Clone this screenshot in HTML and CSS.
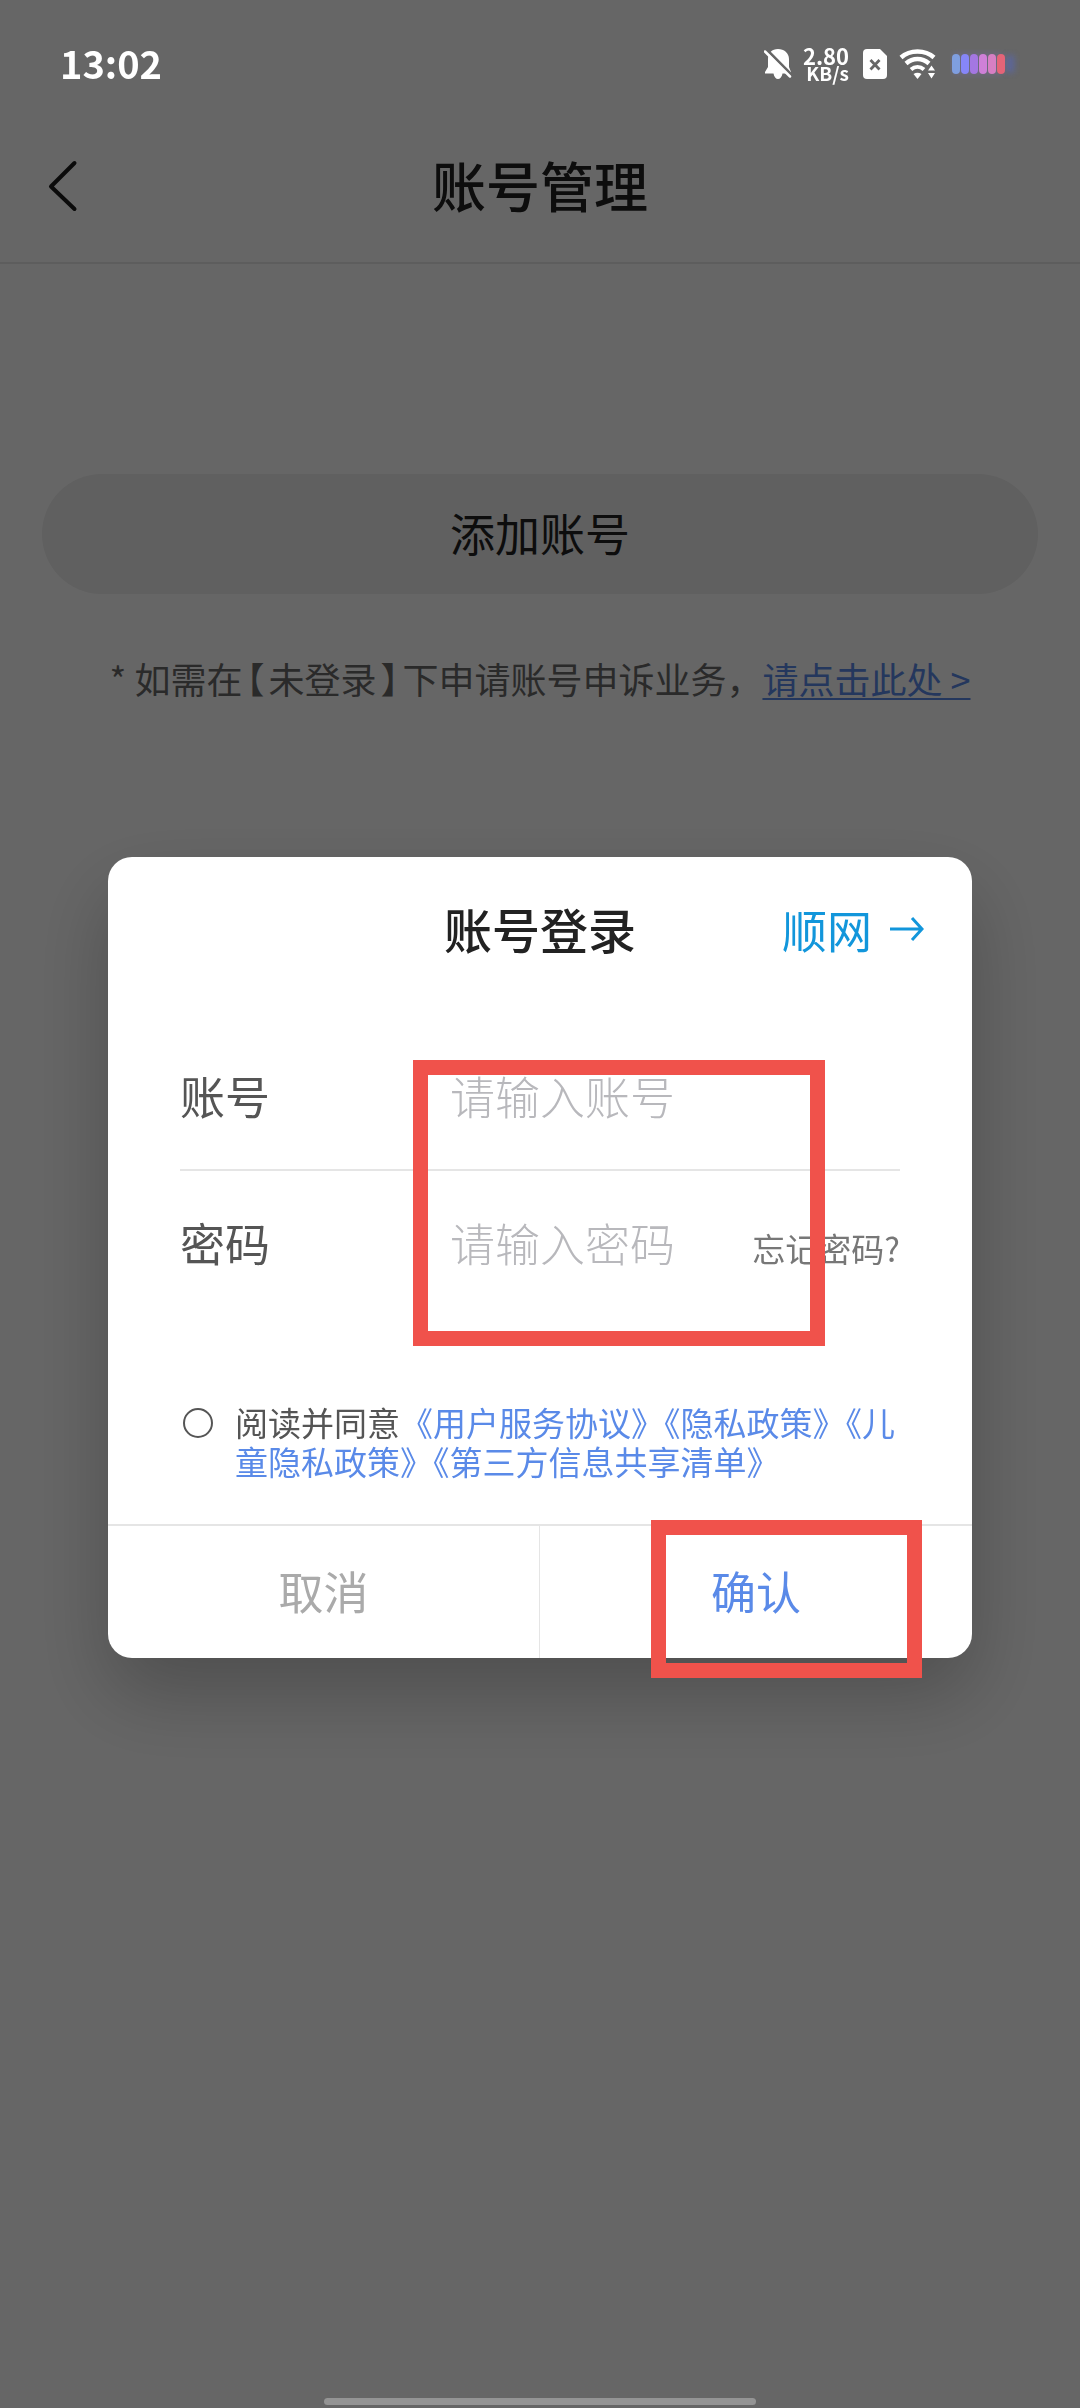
FILE: index.html
```html
<!DOCTYPE html>
<html lang="zh-CN">
<head>
  <meta charset="UTF-8">
  <meta name="viewport" content="width=device-width, initial-scale=1.0">
  <title>账号管理</title>
  <link rel="stylesheet" href="styles.css">
</head>
<body>
  <!-- Status bar -->
  <div class="status-bar">
    <span class="time">13:02</span>
    <div class="status-icons">
      <svg class="icon-bell" width="28" height="32" viewBox="0 0 28 32">
        <path d="M14 1C8 1 4 5 4 11v8L1 24v1.500h8.500C10 29 12 31 14 31s4-2 4.500-5.500H27V24l-2-5v-8C25 5 20 1 14 1z" fill="#fff"/>
        <path d="M2.500 1.500L28 27.500" stroke="#666" stroke-width="3"/>
        <path d="M1 3.500L26 28.500" stroke="#fff" stroke-width="2.500" stroke-linecap="round"/>
      </svg>
      <div class="speed"><span class="speed-value">2.80</span><span class="speed-unit">KB/s</span></div>
      <svg class="icon-sim" width="24" height="30" viewBox="0 0 24 30">
        <path d="M4 0h13l7 7v19a4 4 0 0 1-4 4H4a4 4 0 0 1-4-4V4a4 4 0 0 1 4-4z" fill="#fff"/>
        <path d="M7.500 11l9 9.500M16.500 11l-9 9.500" stroke="#666" stroke-width="2.800"/>
      </svg>
      <svg class="icon-wifi" width="37" height="30" viewBox="0 0 37 30">
        <path d="M2 8.500C11 .5 26 .5 35 8.500" fill="none" stroke="#fff" stroke-width="4.500"/>
        <path d="M7 14.500C14 8.500 23 8.500 30 14.500" fill="none" stroke="#fff" stroke-width="4.500"/>
        <path d="M12 20.500C16 17 21 17 25 20.500" fill="none" stroke="#fff" stroke-width="4"/>
        <path d="M14.500 25q4-2.500 8 0l-4 5z" fill="#fff"/>
        <path d="M29 21.500l3.500-5 3.500 5zM29 24l3.500 5.500L36 24z" fill="#fff"/>
      </svg>
      <svg class="icon-battery" width="70" height="30" viewBox="0 0 70 30">
        <defs>
          <filter id="glow" x="-100%" y="-50%" width="300%" height="200%"><feGaussianBlur stdDeviation="3"/></filter>
        </defs>
        <rect x="1" y="4" width="54" height="22" rx="6" fill="#7a72b0" opacity=".35" filter="url(#glow)"/>
        <rect x="57" y="6" width="7" height="18" rx="3" fill="#5568c8" opacity=".6" filter="url(#glow)"/>
        <rect x="2" y="5" width="8" height="20" rx="4" fill="#7f9ee0"/>
        <rect x="11" y="5" width="8" height="20" rx="4" fill="#8686f8"/>
        <rect x="20" y="5" width="8" height="20" rx="4" fill="#a477e2"/>
        <rect x="29" y="5" width="8" height="20" rx="4" fill="#cf80d8"/>
        <rect x="38" y="5" width="8" height="20" rx="4" fill="#d77fc4"/>
        <rect x="47" y="5" width="8" height="20" rx="4" fill="#e56478"/>
      </svg>
    </div>
  </div>

  <!-- Account page -->
  <header class="nav">
    <button class="back" aria-label="返回">
      <svg width="30" height="52" viewBox="0 0 30 52">
        <path d="M26.500 3L3 26.500 26.500 49" fill="none" stroke="#1c1c1c" stroke-width="4" stroke-linecap="round" stroke-linejoin="round"/>
      </svg>
    </button>
    <h1>账号管理</h1>
  </header>
  <main class="page">
    <button class="add-account">添加账号</button>
    <p class="notice">* 如需在<span class="bracket">【</span>未登录<span class="bracket">】</span>下申请账号申诉业务，<a href="#">请点击此处 &gt;</a></p>
  </main>

  <!-- Login dialog -->
  <div class="overlay">
    <form class="dialog" role="dialog" aria-labelledby="dialog-title">
      <div class="dialog-header">
        <h2 id="dialog-title">账号登录</h2>
        <a class="switch" href="#">顺网
          <svg width="34" height="30" viewBox="0 0 34 30">
            <path d="M0 15h31M22 4l10 11-10 11" fill="none" stroke="#1296db" stroke-width="3"/>
          </svg>
        </a>
      </div>
      <div class="fields">
        <div class="field">
          <label for="account">账号</label>
          <input type="text" id="account" placeholder="请输入账号">
        </div>
        <div class="field">
          <label for="password">密码</label>
          <input type="password" id="password" placeholder="请输入密码">
          <a class="forgot" href="#">忘记密码?</a>
        </div>
      </div>
      <div class="agreement">
        <input type="radio" id="agree">
        <p><label for="agree">阅读并同意</label><a href="#">《用户服务协议》</a><a href="#">《隐私政策》</a><a href="#">《儿童隐私政策》</a><a href="#">《第三方信息共享清单》</a></p>
      </div>
      <div class="actions">
        <button type="button" class="cancel">取消</button>
        <button type="button" class="confirm">确认</button>
      </div>
      <div class="mark mark-fields"></div>
      <div class="mark mark-confirm"></div>
    </form>
  </div>

  <div class="home-bar"></div>
</body>
</html>
```

FILE: styles.css
```css
* {
  box-sizing: border-box;
}

body {
  margin: 0;
  min-height: 100vh;
  background: #fff;
  color: #222;
  font-family: "Noto Sans CJK SC", sans-serif;
}

h1, h2, p {
  margin: 0;
}

h1, h2 {
  padding-bottom: 4px;
  font-weight: 500;
}

a {
  color: #5a8ae8;
  text-decoration: none;
}

button {
  padding: 0 0 4px;
  border: none;
  background: none;
  color: inherit;
  font-family: inherit;
  font-size: 45px;
  cursor: pointer;
}

/* Status bar stays above the overlay */
.status-bar {
  position: relative;
  z-index: 20;
  display: flex;
  justify-content: space-between;
  align-items: center;
  height: 110px;
  padding: 18px 60px 0;
  color: #fff;
}

.time {
  padding-bottom: 4px;
  font-size: 38px;
  font-weight: 700;
}

.status-icons {
  display: flex;
  align-items: center;
}

.speed {
  display: flex;
  flex-direction: column;
  align-items: flex-end;
  margin: 0 14px 0 11px;
  font-weight: 700;
}

.speed-value {
  font-size: 22px;
  line-height: 18px;
}

.speed-unit {
  font-size: 19px;
  line-height: 18px;
}

.icon-wifi {
  margin: 0 14px 0 12px;
}

/* Page */
.nav {
  display: grid;
  grid-template-columns: 1fr auto 1fr;
  align-items: center;
  height: 154px;
  padding: 0 48px;
  border-bottom: 2px solid #e8e8e8;
}

.nav h1 {
  font-size: 54px;
}

.back {
  display: flex;
  padding: 0;
}

.page {
  padding: 210px 42px 0;
}

.add-account {
  width: 100%;
  height: 120px;
  border-radius: 60px;
  background: #efefef;
}

.notice {
  margin-top: 58px;
  color: #6a6a6a;
  font-size: 36px;
  line-height: 52px;
  text-align: center;
}

.notice a {
  text-decoration: underline;
  text-decoration-thickness: 2px;
  text-underline-offset: 4px;
}

.bracket {
  margin: 0 4px;
  font-feature-settings: "halt";
}

/* Dialog */
.overlay {
  position: fixed;
  inset: 0;
  z-index: 10;
  display: flex;
  justify-content: center;
  align-items: center;
  padding-top: 107px;
  background: rgba(0, 0, 0, 0.6);
}

.dialog {
  position: relative;
  width: 80%;
  border-radius: 24px;
  background: #fff;
  box-shadow: 0 36px 80px rgba(0, 0, 0, 0.24);
}

.dialog-header {
  display: grid;
  grid-template-columns: 1fr auto 1fr;
  align-items: center;
  height: 146px;
  padding: 0 48px;
}

.dialog-header h2 {
  grid-column: 2;
  font-size: 48px;
}

.switch {
  display: flex;
  justify-content: flex-end;
  align-items: center;
  gap: 18px;
  padding-bottom: 2px;
  color: #1296db;
  font-size: 45px;
}

.fields {
  padding: 22px 72px 0;
}

.field {
  display: flex;
  align-items: center;
  height: 146px;
  padding-bottom: 4px;
  color: #555;
  font-size: 45px;
}

.field:first-child {
  border-bottom: 2px solid #e5e5e5;
}

.field label {
  flex: 0 0 270px;
}

.field input {
  flex: 1;
  min-width: 0;
  padding: 0;
  border: none;
  outline: none;
  background: none;
  color: #333;
  font: inherit;
  font-weight: 300;
}

.field input::placeholder {
  color: #b8b8bc;
}

.forgot {
  padding-top: 12px;
  color: #777;
  font-size: 33px;
}

.agreement {
  display: flex;
  gap: 22px;
  padding: 86px 72px 43px 75px;
  color: #555;
  font-size: 33px;
  line-height: 39px;
}

.agreement input {
  flex: none;
  appearance: none;
  width: 30px;
  height: 30px;
  margin: 5px 0;
  border: 2px solid #555;
  border-radius: 50%;
}

.agreement input:checked {
  border: 9px solid #5a8ae8;
}

.actions {
  display: grid;
  grid-template-columns: 1fr 1fr;
  height: 134px;
  border-top: 2px solid #e5e5e5;
}

.cancel {
  border-right: 1px solid #e5e5e5;
  color: #aaa;
}

.confirm {
  color: #5a8ae8;
}

/* Red marks over the inputs and the confirm button */
.mark {
  position: absolute;
  border: 15px solid #f0524b;
  pointer-events: none;
}

.mark-fields {
  top: 203px;
  left: 305px;
  width: 412px;
  height: 286px;
}

.mark-confirm {
  top: 663px;
  left: 543px;
  width: 271px;
  height: 158px;
}

.home-bar {
  position: fixed;
  bottom: 3px;
  left: 30%;
  z-index: 20;
  width: 40%;
  height: 7px;
  border-radius: 4px;
  background: #949494;
}
```
